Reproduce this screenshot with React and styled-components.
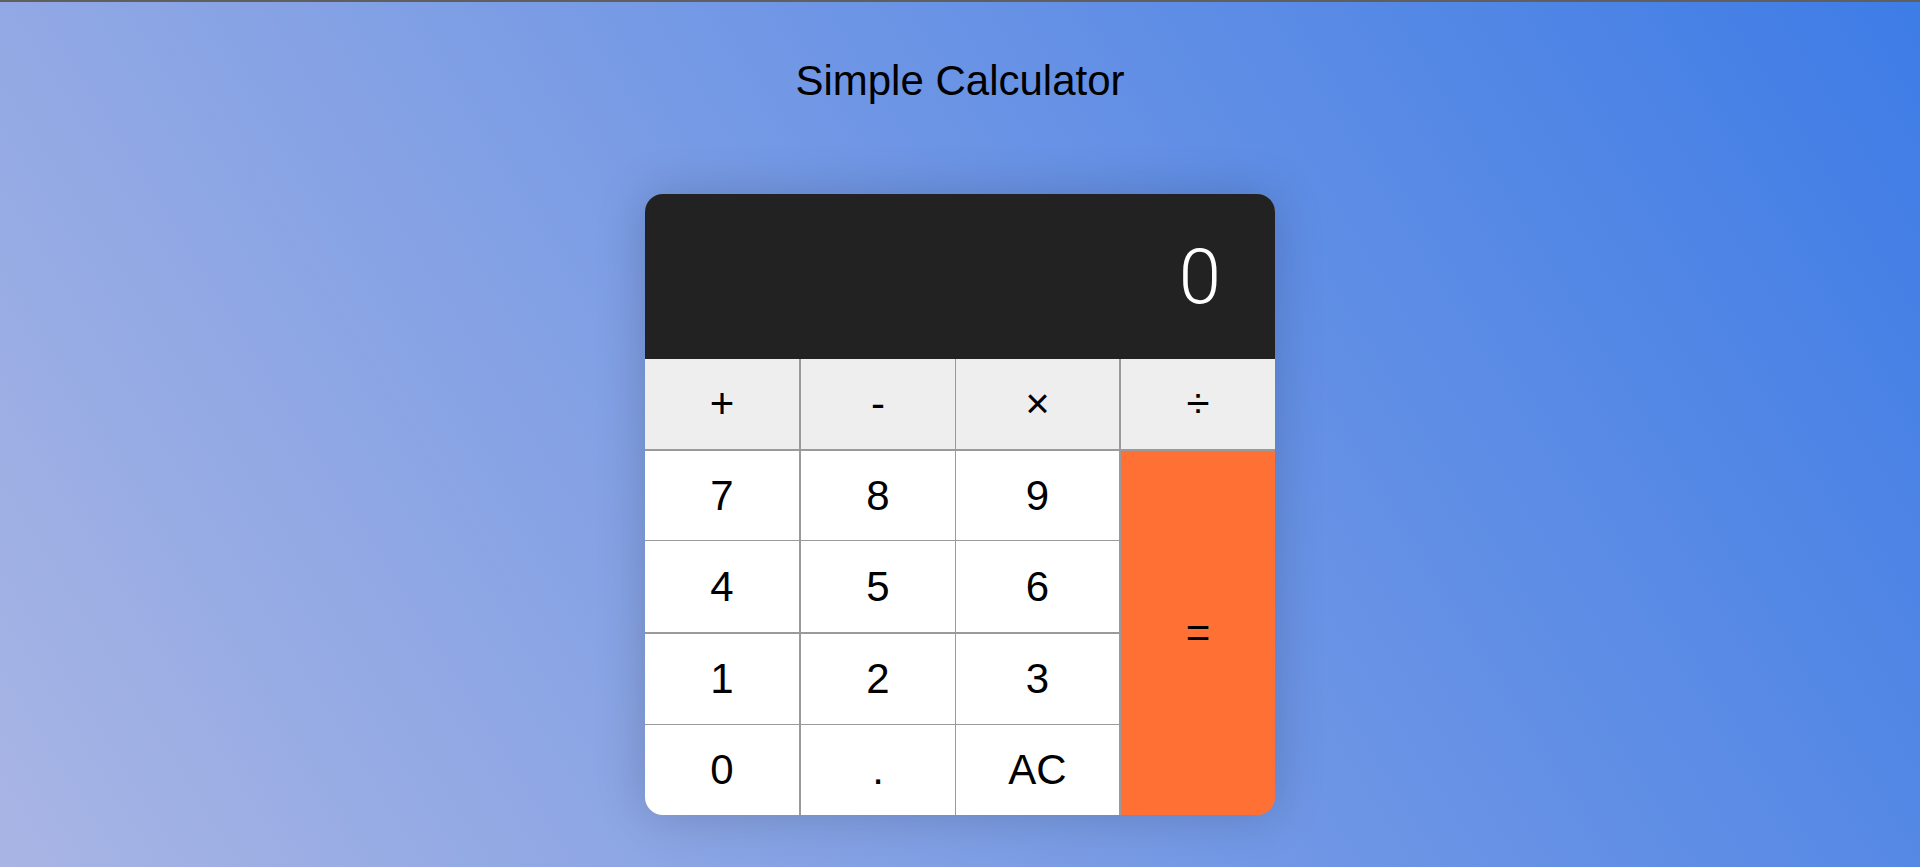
import React, { useState } from 'react'
import styled, { createGlobalStyle } from 'styled-components'

const GlobalStyle = createGlobalStyle`
  html, body {
    margin: 0;
    padding: 0;
  }
  body {
    font-family: "Liberation Sans", Arial, sans-serif;
  }
`

const Page = styled.div`
  min-height: 100vh;
  box-sizing: border-box;
  border-top: 2px solid #5f5f5f;
  background: linear-gradient(58deg, #a9b5e4 0%, #3e7ce6 100%);
  display: flex;
  flex-direction: column;
  align-items: center;
`

const Title = styled.h1`
  margin: 55px 0 0;
  font-size: 42px;
  line-height: 48px;
  font-weight: 400;
  color: #000;
`

const Calculator = styled.div`
  margin-top: 89px;
  width: 630px;
  border-radius: 18px;
  overflow: hidden;
  background: #9a9a9a;
  box-shadow: 0 0 50px rgba(0, 0, 0, 0.18);
`

const Display = styled.div`
  height: 165px;
  box-sizing: border-box;
  padding-right: 54px;
  background: #222222;
  color: #ffffff;
  display: flex;
  align-items: center;
  justify-content: flex-end;
  font-family: Roboto, "Open Sans", sans-serif;
  font-weight: 300;
  font-size: 76px;
`

// separator lines are the thin tracks between the keys
const Keypad = styled.div`
  display: grid;
  grid-template-columns: 154px 2px 154px 1px 163px 2px 154px;
  grid-template-rows: 90px 2px 89px 1px 91px 2px 90px 1px 90px;
`

const keyBackground = {
  op: '#eeeeee',
  num: '#ffffff',
  eq: '#ff7034'
}

const Key = styled.button`
  grid-column: ${props => props.$col * 2 - 1};
  grid-row: ${props => props.$row * 2 - 1} / span ${props => (props.$span || 1) * 2 - 1};
  border: 0;
  padding: 0;
  margin: 0;
  outline: none;
  background: ${props => keyBackground[props.$kind]};
  color: #000;
  font-family: "Liberation Sans", Arial, sans-serif;
  font-size: 42px;
  display: flex;
  align-items: center;
  justify-content: center;
  cursor: pointer;
`

const keys = [
  { label: '+', col: 1, row: 1, kind: 'op' },
  { label: '-', col: 2, row: 1, kind: 'op' },
  { label: '×', col: 3, row: 1, kind: 'op' },
  { label: '÷', col: 4, row: 1, kind: 'op' },
  { label: '7', col: 1, row: 2, kind: 'num' },
  { label: '8', col: 2, row: 2, kind: 'num' },
  { label: '9', col: 3, row: 2, kind: 'num' },
  { label: '4', col: 1, row: 3, kind: 'num' },
  { label: '5', col: 2, row: 3, kind: 'num' },
  { label: '6', col: 3, row: 3, kind: 'num' },
  { label: '1', col: 1, row: 4, kind: 'num' },
  { label: '2', col: 2, row: 4, kind: 'num' },
  { label: '3', col: 3, row: 4, kind: 'num' },
  { label: '0', col: 1, row: 5, kind: 'num' },
  { label: '.', col: 2, row: 5, kind: 'num' },
  { label: 'AC', col: 3, row: 5, kind: 'num' },
  { label: '=', col: 4, row: 2, kind: 'eq', span: 4 }
]

const ops = {
  '+': (a, b) => a + b,
  '-': (a, b) => a - b,
  '×': (a, b) => a * b,
  '÷': (a, b) => (b === 0 ? NaN : a / b)
}

export default function App() {
  const [value, setValue] = useState('0')
  const [stored, setStored] = useState(null)
  const [op, setOp] = useState(null)
  const [fresh, setFresh] = useState(false)

  const press = label => {
    if (label === 'AC') {
      setValue('0')
      setStored(null)
      setOp(null)
      return
    }
    if (ops[label]) {
      setStored(parseFloat(value))
      setOp(label)
      setFresh(true)
      return
    }
    if (label === '=') {
      if (op === null) return
      const result = ops[op](stored, parseFloat(value))
      setValue(String(Number.isFinite(result) ? +result.toFixed(10) : 'Error'))
      setOp(null)
      setFresh(true)
      return
    }
    if (label === '.') {
      if (fresh) {
        setValue('0.')
        setFresh(false)
      } else if (!value.includes('.')) {
        setValue(value + '.')
      }
      return
    }
    if (fresh || value === '0') {
      setValue(label)
      setFresh(false)
    } else {
      setValue(value + label)
    }
  }

  return (
    <Page>
      <GlobalStyle />
      <Title>Simple Calculator</Title>
      <Calculator>
        <Display>{value}</Display>
        <Keypad>
          {keys.map(k => (
            <Key
              key={k.label}
              $col={k.col}
              $row={k.row}
              $span={k.span}
              $kind={k.kind}
              onClick={() => press(k.label)}
            >
              {k.label}
            </Key>
          ))}
        </Keypad>
      </Calculator>
    </Page>
  )
}
